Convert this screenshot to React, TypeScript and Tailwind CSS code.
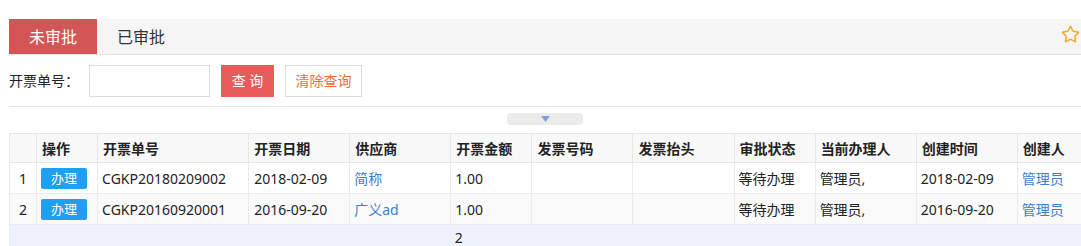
import { Star } from "lucide-react";

const cols = [
  { key: "idx", label: "", w: 27 },
  { key: "op", label: "操作", w: 61 },
  { key: "no", label: "开票单号", w: 151 },
  { key: "date", label: "开票日期", w: 101 },
  { key: "supplier", label: "供应商", w: 101 },
  { key: "amount", label: "开票金额", w: 81 },
  { key: "invNo", label: "发票号码", w: 101 },
  { key: "invTitle", label: "发票抬头", w: 101 },
  { key: "status", label: "审批状态", w: 81 },
  { key: "handler", label: "当前办理人", w: 101 },
  { key: "created", label: "创建时间", w: 101 },
  { key: "creator", label: "创建人", w: 101 },
];

const rows = [
  { no: "CGKP20180209002", date: "2018-02-09", supplier: "简称", amount: "1.00", status: "等待办理", handler: "管理员,", created: "2018-02-09", creator: "管理员" },
  { no: "CGKP20160920001", date: "2016-09-20", supplier: "广义ad", amount: "1.00", status: "等待办理", handler: "管理员,", created: "2016-09-20", creator: "管理员" },
];

export default function App() {
  return (
    <div className="w-[1081px] h-[246px] overflow-hidden bg-white pl-[9px] pt-[19px] text-[14px] text-[#222] font-['Noto_Sans','Noto_Sans_CJK_SC',sans-serif]">
      {/* tabs */}
      <div className="flex items-center h-[36px] bg-[#f5f5f5] border-b border-[#e2e2e2]">
        <div className="w-[88px] h-full bg-[#d45555] text-white text-[16px] flex items-center justify-center">未审批</div>
        <div className="w-[88px] h-full text-[16px] text-[#333] flex items-center justify-center">已审批</div>
        <div className="flex-1" />
        <Star className="w-[19px] h-[19px] text-[#f5a623] mr-[1px] mb-[4px]" strokeWidth={1.8} />
      </div>

      {/* filter */}
      <div className="flex items-center h-[52px] border-b border-[#e6e6e6]">
        <span className="w-[80px]">开票单号：</span>
        <input className="w-[121px] h-[32px] border border-[#dcdcdc] outline-none px-2" />
        <button className="ml-[11px] w-[53px] h-[32px] bg-[#e85b5b] text-white text-[14px]">查 询</button>
        <button className="ml-[11px] w-[77px] h-[32px] border border-[#dcdcdc] bg-white text-[#f26b3a] text-[14px]">清除查询</button>
      </div>

      {/* collapse handle */}
      <div className="flex justify-center h-[26px] pt-[6px]">
        <div className="w-[76px] h-[12px] rounded-[4px] bg-[#ebebeb] flex items-center justify-center">
          <svg width="9" height="6" viewBox="0 0 9 6">
            <path d="M0 0h9L4.5 6z" fill="#7ea2d8" />
          </svg>
        </div>
      </div>

      {/* table */}
      <table className="table-fixed border-collapse w-[1110px]">
        <colgroup>
          {cols.map((c) => (
            <col key={c.key} style={{ width: c.w }} />
          ))}
        </colgroup>
        <thead>
          <tr className="h-[29px] bg-[#f8f8f8]">
            {cols.map((c) => (
              <th key={c.key} className="border border-[#e6e6e6] text-left font-bold px-[5px] whitespace-nowrap">
                {c.label}
              </th>
            ))}
          </tr>
        </thead>
        <tbody>
          {rows.map((r, i) => (
            <tr key={r.no} className={`h-[31px] ${i % 2 ? "bg-[#fafafa]" : "bg-white"}`}>
              <td className="border border-[#ebebeb] text-center">{i + 1}</td>
              <td className="border border-[#ebebeb] px-[4px]">
                <span className="inline-flex items-center justify-center w-[46px] h-[21px] rounded-[2px] bg-[#1e9ff2] text-white text-[13px]">办理</span>
              </td>
              <td className="border border-[#ebebeb] px-[4px]">{r.no}</td>
              <td className="border border-[#ebebeb] px-[5px]">{r.date}</td>
              <td className="border border-[#ebebeb] px-[4px] text-[#3a7fd5]">{r.supplier}</td>
              <td className="border border-[#ebebeb] px-[4px]">{r.amount}</td>
              <td className="border border-[#ebebeb]" />
              <td className="border border-[#ebebeb]" />
              <td className="border border-[#ebebeb] px-[4px]">{r.status}</td>
              <td className="border border-[#ebebeb] px-[4px]">{r.handler}</td>
              <td className="border border-[#ebebeb] px-[4px]">{r.created}</td>
              <td className="border border-[#ebebeb] px-[4px] text-[#3a7fd5]">{r.creator}</td>
            </tr>
          ))}
          <tr className="h-[24px] bg-[#eef2fc]">
            <td colSpan={5} className="border-l border-[#ebebeb]" />
            <td className="px-[4px] align-top pt-[2px]">2</td>
            <td colSpan={6} />
          </tr>
        </tbody>
      </table>
    </div>
  );
}
